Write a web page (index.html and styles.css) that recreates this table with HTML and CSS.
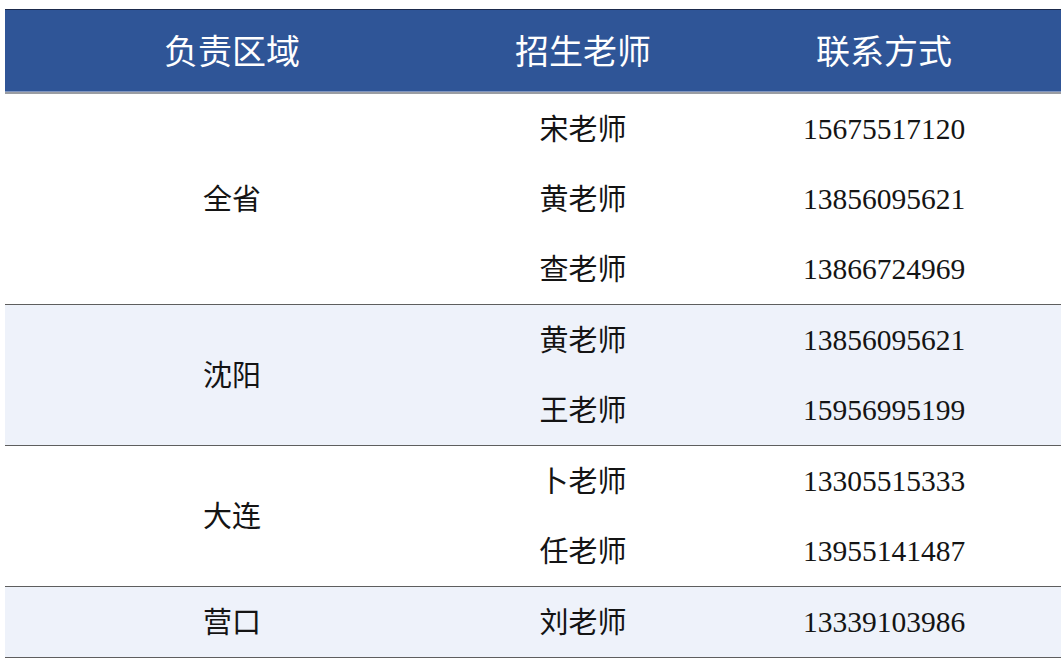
FILE: index.html
```html
<!DOCTYPE html>
<html lang="zh-CN">
<head>
<meta charset="utf-8">
<title>招生老师联系方式</title>
<link rel="stylesheet" href="styles.css">
</head>
<body>
<div class="table">
  <div class="head">
    <div class="cell">负责区域</div>
    <div class="cell">招生老师</div>
    <div class="cell">联系方式</div>
  </div>
  <div class="group">
    <div class="cell region r3">全省</div>
    <div class="cell">宋老师</div><div class="cell num">15675517120</div>
    <div class="cell">黄老师</div><div class="cell num">13856095621</div>
    <div class="cell">查老师</div><div class="cell num">13866724969</div>
  </div>
  <div class="group alt">
    <div class="cell region r2">沈阳</div>
    <div class="cell">黄老师</div><div class="cell num">13856095621</div>
    <div class="cell">王老师</div><div class="cell num">15956995199</div>
  </div>
  <div class="group">
    <div class="cell region r2">大连</div>
    <div class="cell">卜老师</div><div class="cell num">13305515333</div>
    <div class="cell">任老师</div><div class="cell num">13955141487</div>
  </div>
  <div class="group alt">
    <div class="cell region">营口</div>
    <div class="cell">刘老师</div><div class="cell num">13339103986</div>
  </div>
</div>
</body>
</html>
```
FILE: styles.css
```css
html, body {
  margin: 0;
  padding: 0;
  background: #ffffff;
}
body {
  font-family: "Liberation Serif", "Noto Sans CJK SC", serif;
  color: #141414;
}
.table {
  margin: 9px 0 0 5px;
  width: 1056px;
}
.head,
.group {
  display: grid;
  grid-template-columns: 454px 248px 1fr;
}
.head {
  height: 82px;
  background: #2f5597;
  border-top: 1px solid #1b2a4c;
  border-bottom: 2px solid #9a9da3;
  box-shadow: inset 0 -1px 0 #7f95c0;
  color: #ffffff;
  font-size: 34px;
}
.head .cell {
  padding-top: 4px;
}
.group {
  grid-auto-rows: 70px;
  border-bottom: 1px solid #5e5e5e;
  font-size: 29px;
}
.group:first-of-type,
.group + .group {
  margin-top: 0;
}
.group.alt {
  background: #eef2fa;
}
.cell {
  display: flex;
  align-items: center;
  justify-content: center;
  line-height: 1;
  padding-top: 2px;
}
.region {
  grid-column: 1;
}
.region.r2 {
  grid-row: span 2;
}
.region.r3 {
  grid-row: span 3;
}
.num {
  font-size: 29.5px;
}
```
